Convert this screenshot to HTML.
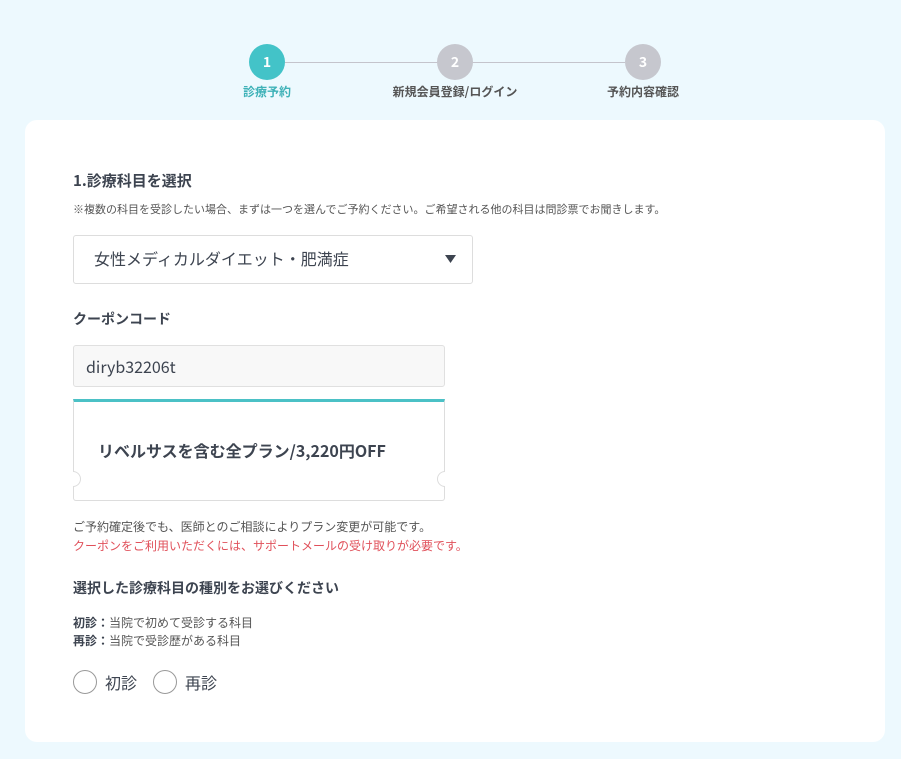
<!DOCTYPE html>
<html><head><meta charset="utf-8"><style>
*{margin:0;padding:0;box-sizing:border-box}
body{width:901px;height:759px;background:#edf9fe;font-family:"Noto Sans CJK JP","Liberation Sans",sans-serif;color:#3d4450;position:relative;overflow:hidden}
.a{position:absolute;white-space:nowrap;line-height:1.3}
.c{position:absolute;width:36px;height:36px;border-radius:50%;top:44px;color:#fff;font-weight:bold;font-size:14px;text-align:center;line-height:36px}
.lbl{position:absolute;top:83px;font-size:12px;font-weight:bold;color:#555;text-align:center;width:200px}
.card{position:absolute;left:25px;top:120px;width:860px;height:622px;background:#fff;border-radius:12px}
.notch{position:absolute;width:16px;height:16px;border-radius:50%;background:#fff;border:1px solid #ddd;top:471px}
.r{position:absolute;width:24px;height:24px;border-radius:50%;border:1px solid #999;top:670px;background:#fff}
</style></head><body>
<div class="a" style="left:285px;top:62px;width:340px;height:1px;background:#c4c4cc"></div>
<div class="c" style="left:249px;background:#43c3c8">1</div>
<div class="c" style="left:437px;background:#c6c7ce">2</div>
<div class="c" style="left:625px;background:#c6c7ce">3</div>
<div class="lbl" style="left:167px;color:#3fb2b8">診療予約</div>
<div class="lbl" style="left:355px">新規会員登録/ログイン</div>
<div class="lbl" style="left:543px">予約内容確認</div>
<div class="card"></div>
<div class="a" style="left:73px;top:171px;font-size:15px;font-weight:bold">1.診療科目を選択</div>
<div class="a" style="left:73px;top:202px;font-size:11px;color:#555">※複数の科目を受診したい場合、まずは一つを選んでご予約ください。ご希望される他の科目は問診票でお聞きします。</div>
<div class="a" style="left:73px;top:235px;width:400px;height:49px;border:1px solid #ddd;border-radius:3px"></div>
<div class="a" style="left:94px;top:248px;font-size:16px">女性メディカルダイエット・肥満症</div>
<svg class="a" style="left:445px;top:255px" width="12" height="9"><path d="M0 0H11L5.5 8Z" fill="#3d4450"/></svg>
<div class="a" style="left:73px;top:310px;font-size:14px;font-weight:bold">クーポンコード</div>
<div class="a" style="left:73px;top:345px;width:372px;height:42px;border:1px solid #e0e0e0;border-radius:3px;background:#f8f8f8"></div>
<div class="a" style="left:86px;top:356px;font-size:16px">diryb32206t</div>
<div class="a" style="left:73px;top:399px;width:372px;height:102px;border:1px solid #ddd;border-top:3px solid #4bc1c6;border-radius:0 0 3px 3px"></div>
<div class="notch" style="left:65px"></div>
<div class="notch" style="left:437px"></div>
<div class="a" style="left:60px;top:468px;width:13px;height:22px;background:#fff"></div>
<div class="a" style="left:445px;top:468px;width:13px;height:22px;background:#fff"></div>
<div class="a" style="left:98px;top:440px;font-size:16px;font-weight:bold">リベルサスを含む全プラン/3,220円OFF</div>
<div class="a" style="left:73px;top:519px;font-size:12px;color:#555">ご予約確定後でも、医師とのご相談によりプラン変更が可能です。</div>
<div class="a" style="left:73px;top:538px;font-size:12px;color:#e0505a">クーポンをご利用いただくには、サポートメールの受け取りが必要です。</div>
<div class="a" style="left:73px;top:579px;font-size:14px;font-weight:bold">選択した診療科目の種別をお選びください</div>
<div class="a" style="left:73px;top:615px;font-size:12px;color:#555"><b style="color:#3d4450">初診：</b>当院で初めて受診する科目</div>
<div class="a" style="left:73px;top:633px;font-size:12px;color:#555"><b style="color:#3d4450">再診：</b>当院で受診歴がある科目</div>
<div class="r" style="left:73px"></div>
<div class="a" style="left:105px;top:672px;font-size:16px">初診</div>
<div class="r" style="left:153px"></div>
<div class="a" style="left:185px;top:672px;font-size:16px">再診</div>
</body></html>
